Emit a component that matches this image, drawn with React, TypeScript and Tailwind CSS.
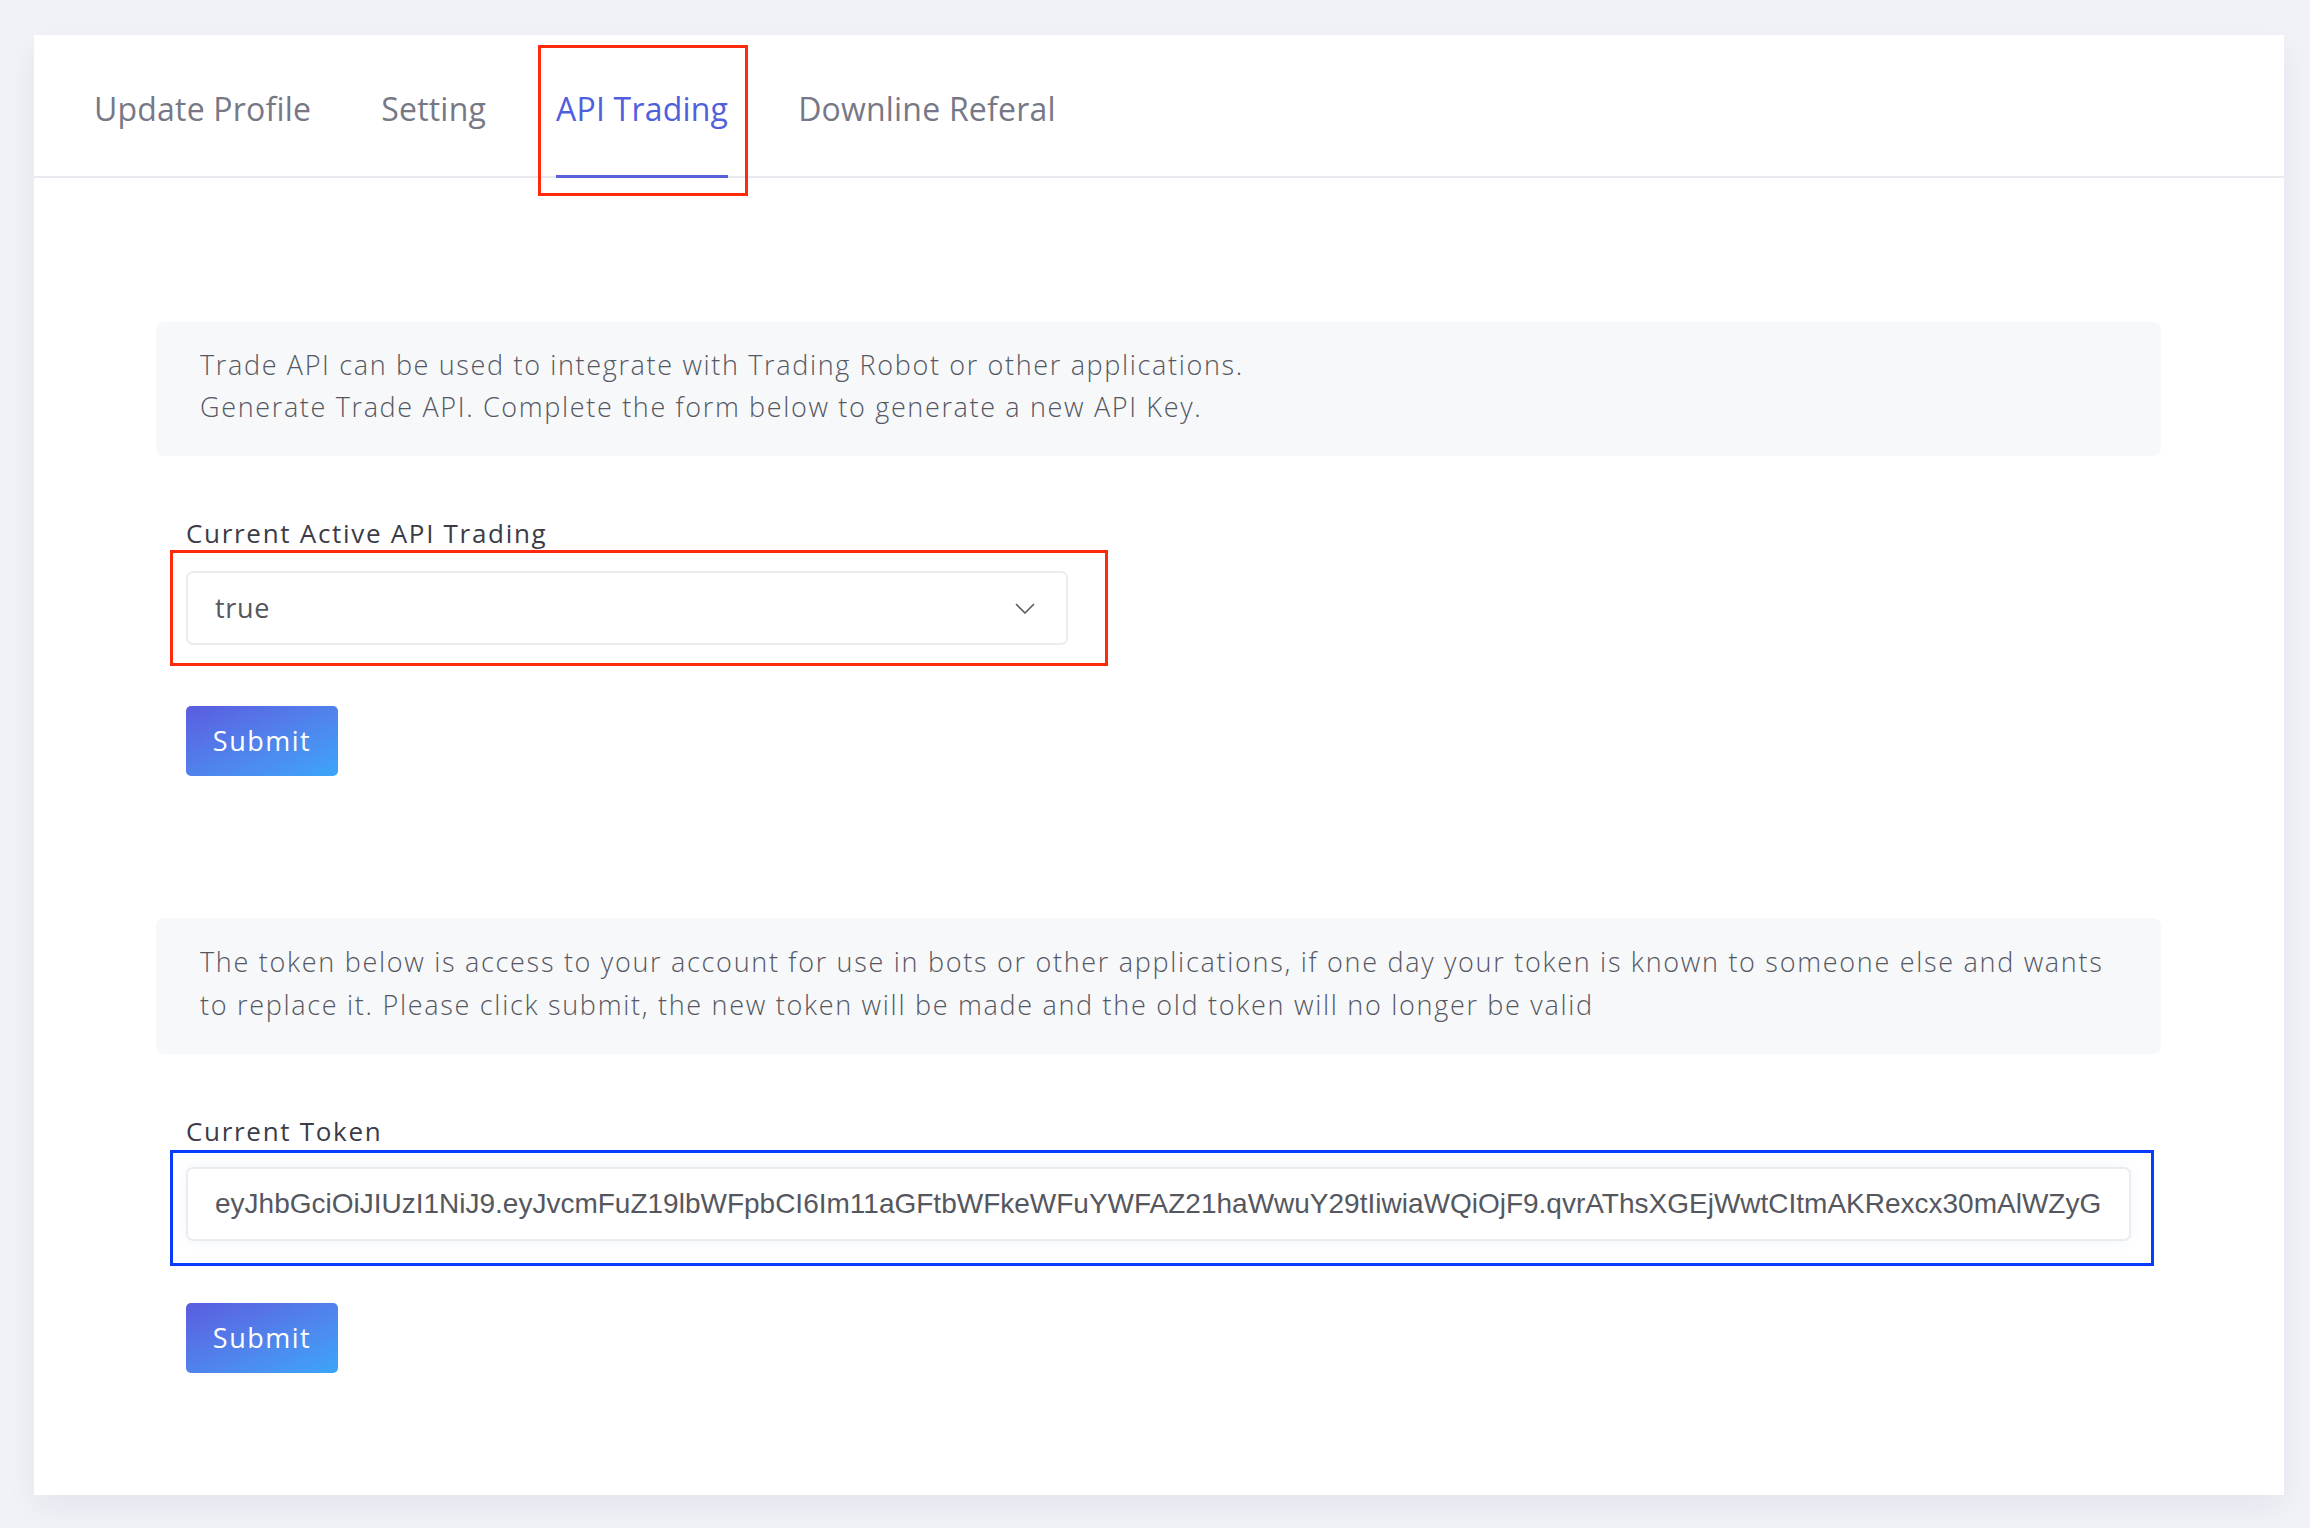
const TABS = ["Update Profile", "Setting", "API Trading", "Downline Referal"];

const TOKEN =
  "eyJhbGciOiJIUzI1NiJ9.eyJvcmFuZ19lbWFpbCI6Im11aGFtbWFkeWFuYWFAZ21haWwuY29tIiwiaWQiOjF9.qvrAThsXGEjWwtCItmAKRexcx30mAlWZyG";

function SubmitButton() {
  return (
    <button className="flex h-[70px] w-[152px] items-center justify-center rounded-[5px] bg-linear-to-br from-[#5a5cdf] to-[#3aa5f8] text-[27px] tracking-[1.5px] text-white">
      Submit
    </button>
  );
}

export default function App() {
  const active = "API Trading";

  return (
    <div className="min-h-screen bg-[#f1f2f7] pt-[35px] pb-[32px] pl-[34px] pr-[26px] font-['Open_Sans',sans-serif]">
      <div className="bg-white shadow-[0_12px_30px_rgba(30,35,80,0.06)]">
        {/* Tabs */}
        <div className="flex h-[143px] items-stretch gap-[70px] border-b-2 border-[#e9eaf0] pl-[60px]">
          {TABS.map((tab) => (
            <div
              key={tab}
              className={`relative flex items-center pt-[6px] text-[32px] tracking-[0.2px] ${
                tab === active ? "text-[#5060dc]" : "text-[#777886]"
              }`}
            >
              {tab}
              {tab === active && (
                <>
                  <span className="absolute -bottom-[2px] left-0 right-0 h-[3px] bg-[#5a5fdc]" />
                  <span className="absolute -left-[18px] -right-[20px] top-[10px] h-[151px] border-[3px] border-[#ff2a0c]" />
                </>
              )}
            </div>
          ))}
        </div>

        <div className="pl-[122px] pr-[123px] pt-[144px] pb-[122px]">
          {/* Trade API info */}
          <div className="rounded-[8px] bg-[#f7f8fa] pl-[44px] pr-[30px] pt-[22px] pb-[28px] text-[27px] leading-[42px] font-light tracking-[1.65px] text-[#555762]">
            <p>Trade API can be used to integrate with Trading Robot or other applications.</p>
            <p>Generate Trade API. Complete the form below to generate a new API Key.</p>
          </div>

          <div className="px-[30px]">
            <div className="mt-[59px] text-[26px] leading-[36px] tracking-[1.7px] text-[#3b3c46]">Current Active API Trading</div>
            <div className="relative mt-[20px] w-[882px]">
              <div className="flex h-[74px] items-center justify-between rounded-[7px] border-2 border-[#ebecf0] pl-[27px] pr-[31px] text-[27px] tracking-[0.7px] text-[#55575f]">
                <span>true</span>
                <svg width="20" height="11" viewBox="0 0 20 11" fill="none">
                  <polyline points="1,1 10,10 19,1" stroke="#5a5c66" strokeWidth="1.6" />
                </svg>
              </div>
              <span className="absolute -left-[16px] -right-[40px] -top-[21px] -bottom-[21px] border-[3px] border-[#ff2a0c]" />
            </div>
            <div className="mt-[61px]">
              <SubmitButton />
            </div>
          </div>

          {/* Token info */}
          <div className="mt-[142px] rounded-[8px] bg-[#f7f8fa] pl-[44px] pr-[20px] pt-[22px] pb-[28px] text-[27px] leading-[43px] font-light tracking-[1.7px] text-[#555762]">
            The token below is access to your account for use in bots or other applications, if one day your token is
            known to someone else and wants
            <br />
            to replace it. Please click submit, the new token will be made and the old token will no longer be valid
          </div>

          <div className="px-[30px]">
            <div className="mt-[59px] text-[26px] leading-[36px] tracking-[1.7px] text-[#3b3c46]">Current Token</div>
            <div className="relative mt-[18px]">
              <input
                readOnly
                value={TOKEN}
                className="h-[74px] w-full rounded-[7px] border-2 border-[#ebecf0] bg-white pl-[27px] pr-[27px] font-['Liberation_Sans',Arial,sans-serif] text-[28px] text-[#55575f] shadow-[0_0_14px_rgba(60,130,240,0.08)] outline-none"
              />
              <span className="absolute -left-[16px] -right-[23px] -top-[17px] -bottom-[25px] border-[3px] border-[#0a3cff]" />
            </div>
            <div className="mt-[62px]">
              <SubmitButton />
            </div>
          </div>
        </div>
      </div>
    </div>
  );
}
